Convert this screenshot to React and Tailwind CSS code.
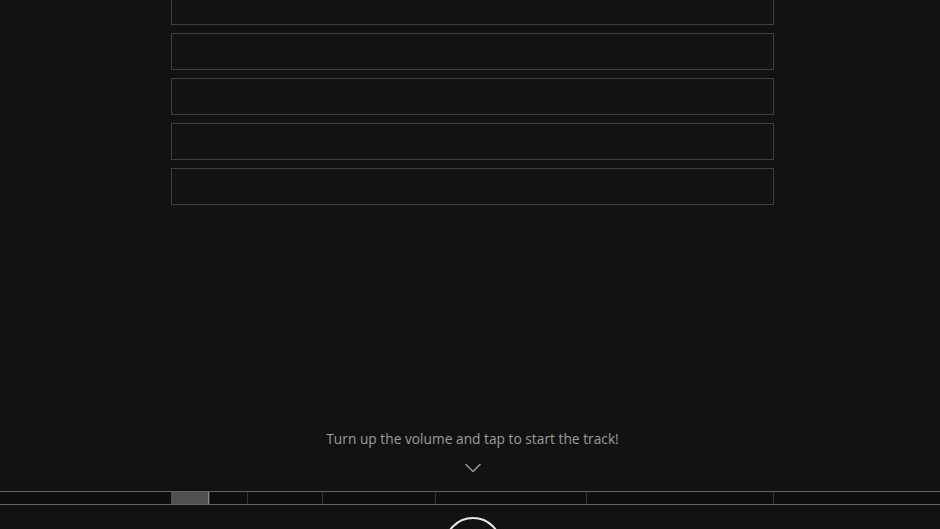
import { ChevronDown } from 'lucide-react'

const segments = [
  { w: 171, first: true },
  { w: 38, active: true },
  { w: 38 },
  { w: 75 },
  { w: 113 },
  { w: 151 },
  { w: 187 },
  { w: 167 },
]

function App() {
  return (
    <div className="h-[529px] w-full overflow-hidden bg-[#121212] flex flex-col items-center" style={{ fontFamily: '"Open Sans", "Liberation Sans", sans-serif' }}>

      {/* question boxes */}
      <div className="mt-[-12px] shrink-0 flex flex-col gap-2 w-[603px] self-start ml-[171px]">
        {[0, 1, 2, 3, 4].map((i) => (
          <div key={i} className="h-[37px] shrink-0 border border-[#3f3f3f] bg-[#131313]" />
        ))}
      </div>

      {/* hint */}
      <p className="mt-[224px] shrink-0 h-5 ml-[5px] text-[13.75px] leading-5 text-[#9c9c9c] whitespace-nowrap">
        Turn up the volume and tap to start the track!
      </p>
      <ChevronDown className="mt-[5px] shrink-0 w-[28px] h-[28px] text-[#959595] ml-[5px]" strokeWidth={1.4} />

      {/* track */}
      <div className="mt-[9px] shrink-0 w-full h-[14px] border-y border-y-[#626262] bg-[#0e0e0e] flex">
        {segments.map((s, i) => (
          <div
            key={i}
            style={{ width: s.w }}
            className={
              s.active
                ? 'h-full bg-[#505050] border-r border-r-[#8a8a8a] shrink-0'
                : s.first
                ? 'h-full shrink-0'
                : 'h-full border-l border-l-[#343434] shrink-0'
            }
          />
        ))}
      </div>

      {/* play button */}
      <div className="mt-[12px] w-[58px] h-[58px] shrink-0 rounded-full border-2 border-[#e8e8e8] ml-[5px]" />
    </div>
  )
}

export default App
